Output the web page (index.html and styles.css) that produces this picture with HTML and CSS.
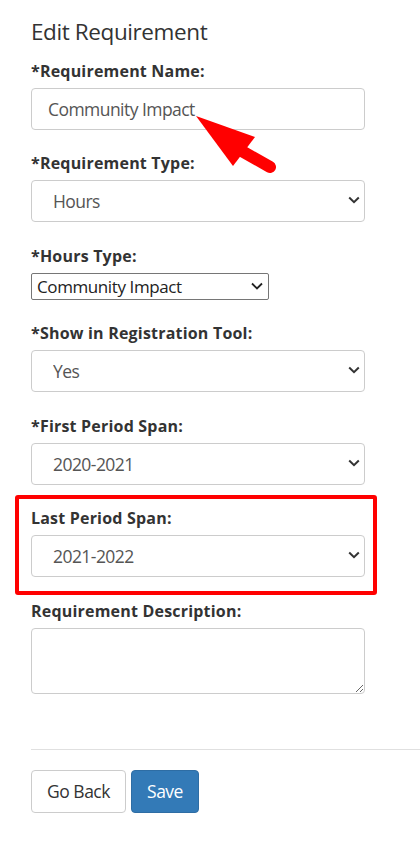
FILE: index.html
```html
<!DOCTYPE html>
<html lang="en">
<head>
<meta charset="utf-8">
<title>Edit Requirement</title>
<link rel="stylesheet" href="styles.css">
</head>
<body>
<div class="page">
  <h3 class="title">Edit Requirement</h3>
  <form class="form">
    <div class="group">
      <label class="label" for="name">*Requirement Name:</label>
      <input class="control" id="name" type="text" value="Community Impact">
    </div>
    <div class="group">
      <label class="label" for="type">*Requirement Type:</label>
      <div class="select-wrap">
        <select class="control select" id="type"><option>Hours</option></select>
        <svg class="chev" width="12" height="8" viewBox="0 0 12 8"><polyline points="1.2,1.5 6,6.2 10.8,1.5" fill="none" stroke="#333" stroke-width="2"/></svg>
      </div>
    </div>
    <div class="group">
      <label class="label" for="htype">*Hours Type:</label>
      <div class="select-wrap native-wrap">
        <select class="native" id="htype"><option>Community Impact</option></select>
        <svg class="chev chev-native" width="12" height="8" viewBox="0 0 12 8"><polyline points="1,1.5 6,6.5 11,1.5" fill="none" stroke="#222" stroke-width="1.8"/></svg>
      </div>
    </div>
    <div class="group">
      <label class="label" for="show">*Show in Registration Tool:</label>
      <div class="select-wrap">
        <select class="control select" id="show"><option>Yes</option></select>
        <svg class="chev" width="12" height="8" viewBox="0 0 12 8"><polyline points="1.2,1.5 6,6.2 10.8,1.5" fill="none" stroke="#333" stroke-width="2"/></svg>
      </div>
    </div>
    <div class="group">
      <label class="label" for="first">*First Period Span:</label>
      <div class="select-wrap">
        <select class="control select" id="first"><option>2020-2021</option></select>
        <svg class="chev" width="12" height="8" viewBox="0 0 12 8"><polyline points="1.2,1.5 6,6.2 10.8,1.5" fill="none" stroke="#333" stroke-width="2"/></svg>
      </div>
    </div>
    <div class="group highlighted">
      <label class="label" for="last">Last Period Span:</label>
      <div class="select-wrap">
        <select class="control select" id="last"><option>2021-2022</option></select>
        <svg class="chev" width="12" height="8" viewBox="0 0 12 8"><polyline points="1.2,1.5 6,6.2 10.8,1.5" fill="none" stroke="#333" stroke-width="2"/></svg>
      </div>
    </div>
    <div class="group">
      <label class="label" for="desc">Requirement Description:</label>
      <textarea class="control area" id="desc"></textarea>
    </div>
    <hr class="rule">
    <div class="actions">
      <button type="button" class="btn btn-default">Go Back</button>
      <button type="button" class="btn btn-primary">Save</button>
    </div>
  </form>
  <svg class="arrow" width="420" height="841" viewBox="0 0 420 841">
    <line x1="240" y1="150" x2="270" y2="167" stroke="#ff0000" stroke-width="12" stroke-linecap="round"/>
    <polygon points="196,116 255,137 233,166" fill="#ff0000"/>
  </svg>
</div>
</body>
</html>
```

FILE: styles.css
```css
*,
*::before,
*::after {
  box-sizing: border-box;
}

body {
  margin: 0;
  background: #fff;
  color: #333;
  font-family: "Open Sans", "Noto Sans", sans-serif;
}

.page {
  position: relative;
  padding: 18.5px 0 0 31px;
  min-height: 841px;
}

.title {
  margin: 0 0 16px;
  font-size: 22.5px;
  font-weight: 400;
  line-height: 26.4px;
  letter-spacing: -0.4px;
}

.form {
  margin: 0;
}

.group {
  position: relative;
  margin-bottom: 23.5px;
}

.label {
  display: block;
  margin-bottom: 7px;
  font-size: 16px;
  font-weight: 700;
  line-height: 20px;
  letter-spacing: 0.2px;
}

.control {
  display: block;
  width: 334px;
  height: 42px;
  margin: 0;
  padding: 0 16px;
  border: 1px solid #ccc;
  border-radius: 4px;
  background: #fff;
  color: #555;
  font-family: "Open Sans", "Noto Sans", sans-serif;
  font-size: 17.5px;
  letter-spacing: -0.55px;
  outline: none;
}

.select {
  appearance: none;
  -webkit-appearance: none;
  padding-left: 21px;
}

.select-wrap {
  position: relative;
  width: 334px;
}

.chev {
  position: absolute;
  right: 5px;
  top: calc(50% - 5px);
  pointer-events: none;
}

.native-wrap {
  width: 238px;
}

.native {
  appearance: none;
  -webkit-appearance: none;
  display: block;
  width: 238px;
  height: 27px;
  margin: 0;
  padding: 0 5px;
  border: 1px solid #767676;
  border-radius: 2px;
  background: #fff;
  color: #222;
  font-family: "Open Sans", "Noto Sans", sans-serif;
  font-size: 17px;
  letter-spacing: -0.4px;
  outline: none;
}

.chev-native {
  right: 6px;
  top: calc(50% - 4px);
}

.area {
  height: 66px;
  padding: 6px 12px;
  resize: both;
}

.highlighted::before {
  content: "";
  position: absolute;
  left: -16px;
  top: -13px;
  width: 362px;
  height: 100px;
  border: 4px solid #ff0000;
  border-radius: 3px;
  pointer-events: none;
}

.rule {
  margin: 55px 0 20px;
  border: 0;
  border-top: 1px solid #e0e0e0;
  height: 0;
}

.actions {
  display: flex;
  gap: 5px;
}

.btn {
  height: 43px;
  margin: 0;
  padding: 0;
  border: 1px solid #ccc;
  border-radius: 4px;
  font-family: "Open Sans", "Noto Sans", sans-serif;
  font-size: 17.5px;
  letter-spacing: -0.5px;
  line-height: 1;
  white-space: nowrap;
}

.btn-default {
  background: #fff;
  color: #333;
  width: 95px;
}

.btn-primary {
  background: #337ab7;
  border-color: #2e6da4;
  color: #fff;
  width: 68px;
}

.arrow {
  position: absolute;
  left: 0;
  top: 0;
  pointer-events: none;
}
```
